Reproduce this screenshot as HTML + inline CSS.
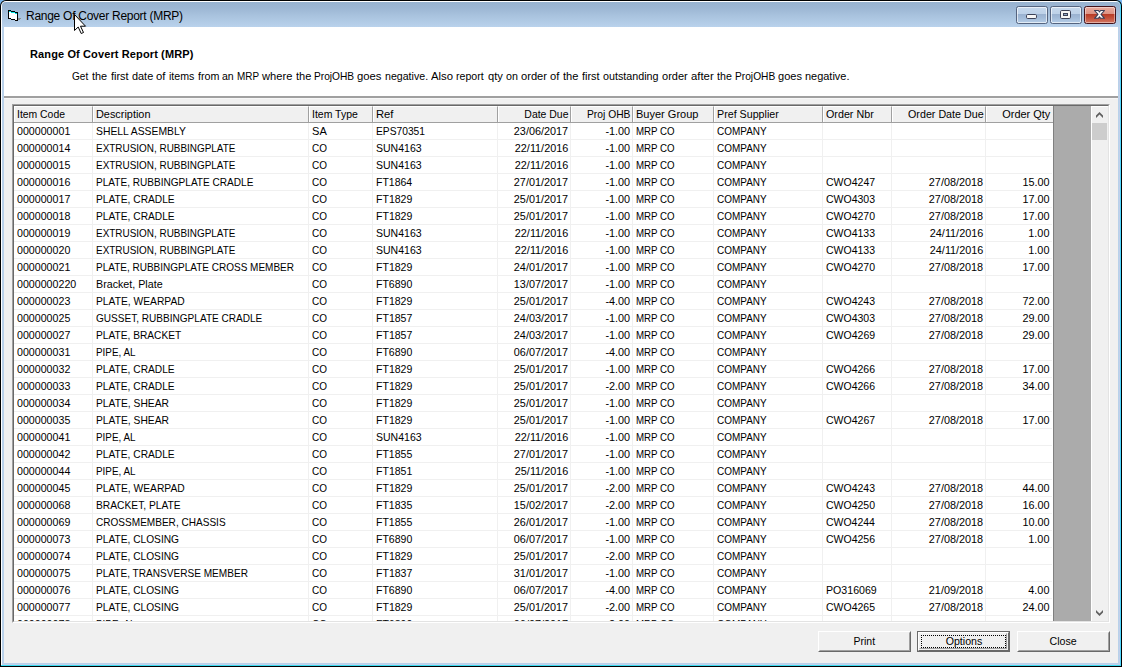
<!DOCTYPE html>
<html><head><meta charset="utf-8"><title>Range Of Cover Report (MRP)</title>
<style>
*{box-sizing:border-box;margin:0;padding:0}
html,body{width:1122px;height:667px;overflow:hidden;background:#7ab6ee}
body{font-family:"Liberation Sans",Arial,sans-serif;font-size:11px;color:#000;position:relative}
#win{position:absolute;left:0;top:0;width:1122px;height:667px;background:#000;border-radius:6px 6px 0 0;overflow:hidden}
#hl{position:absolute;left:1px;top:1px;width:1120px;height:665px;background:#fff;border-radius:5px 5px 0 0;border-right:1px solid #50d8ff;border-bottom:1px solid #3cdcf0}
#frame{position:absolute;left:2px;top:2px;width:1118px;height:663px;background:#b9d1ea;border-radius:4px 4px 0 0;box-shadow:inset -1px -1px 0 #c3d0ea}
#cap{position:absolute;left:2px;top:2px;width:1118px;height:25px;background:linear-gradient(#98b3d0 0%,#9db7d4 25%,#a9c3de 55%,#b9d2ec 100%);border-radius:4px 4px 0 0}
#ttl{position:absolute;left:26px;top:9px;font-size:12px;line-height:15px;letter-spacing:-0.27px;white-space:nowrap}
#client{position:absolute;left:4px;top:27px;width:1114px;height:636px;background:#f0f0f0}
#top{position:absolute;left:0;top:0;width:1114px;height:69px;background:#fff}
#sep1{position:absolute;left:0;top:69px;width:1114px;height:2px;background:#a0a0a0}
#sep2{position:absolute;left:0;top:71px;width:1114px;height:1px;background:#f7f7f7}
#h1{position:absolute;left:26px;top:20px;font-weight:bold;font-size:11px;line-height:14px;letter-spacing:.12px;white-space:nowrap}
#desc{position:absolute;left:0;top:42px;width:1114px;height:14px;font-size:11px;line-height:14px}
.w{position:absolute;top:0;white-space:pre;transform-origin:0 50%}
/* list */
#lb{position:absolute;left:8px;top:77px;width:1098px;height:519px;border:1px solid;border-color:#a0a0a0 #fff #fff #a0a0a0}
#lb2{position:absolute;left:0;top:0;width:1096px;height:517px;border:1px solid;border-color:#696969 #e3e3e3 #e3e3e3 #696969}
#lv{position:absolute;left:10px;top:79px;width:1077px;height:515px;background:#fff;overflow:hidden}
#grid{position:absolute;left:0;top:0;width:1040px;height:515px;overflow:hidden;
 background:repeating-linear-gradient(to bottom,transparent 0,transparent 16px,#f0f0f0 16px,#f0f0f0 17px) 0 0/1038px 100% no-repeat;}
#gray{position:absolute;left:1040px;top:0;width:37px;height:515px;background:#ababab}
.hdr{position:absolute;left:0;top:0;width:1040px;height:17px;background:#f0f0f0;border-bottom:1px solid #a0a0a0}
.h{position:absolute;top:0;height:16px;border-top:1px solid #fff;border-left:1px solid #fff;border-right:1px solid #a0a0a0}
.hdr .t{top:0;height:16px;line-height:16px}
.row{position:absolute;left:0;width:1040px;height:17px}
.t{position:absolute;top:0;height:16px;line-height:16px;white-space:nowrap;transform-origin:0 50%}
.t.r{transform-origin:100% 50%}
.bt{display:inline-block;transform-origin:50% 50%}
.vl{position:absolute;top:17px;width:1px;height:498px;background:#f0f0f0}
.vl.end{background:#808080;top:0;height:515px}
/* scrollbar */
#sb{position:absolute;left:1087px;top:79px;width:17px;height:515px;background:#f0f0f0;box-shadow:inset 1px 1px 0 #fff}
#thumb{position:absolute;left:1px;top:17px;width:15px;height:17px;background:#cdcdcd}
#sb svg{position:absolute;left:0}
/* buttons */
.btn{position:absolute;top:604px;width:93px;height:21px;background:#f0f0f0;border:1px solid;border-color:#fff #696969 #696969 #fff;text-align:center;line-height:18px;font-size:11px}
.btn:before{content:"";position:absolute;left:0;top:0;right:0;bottom:0;border:1px solid;border-color:#f0f0f0 #a0a0a0 #a0a0a0 #f0f0f0;pointer-events:none}
.btn.def{border-color:#696969}
.btn.def:before{border-color:#fff #696969 #696969 #fff}
.btn.def:after{content:"";position:absolute;left:1px;top:1px;right:2px;bottom:2px;border:1px solid;border-color:transparent #a0a0a0 #a0a0a0 transparent}
.focus{position:absolute;left:3px;top:3px;width:85px;height:13px;border:1px dotted #000}
/* caption buttons */
.cb{position:absolute;top:6px;width:32px;height:18px;border:1px solid #55647f;border-radius:2.500px;background:linear-gradient(#c6d8ec 0,#bdd1e8 44%,#9ab2d0 45%,#a3bcd9 70%,#b6cee8 100%);box-shadow:inset 0 0 0 1px rgba(255,255,255,.62)}
.cb.x{border-color:#43121a;background:linear-gradient(#eaac9f 0,#dc9283 44%,#b83b26 45%,#c4523c 70%,#d27865 100%);box-shadow:inset 0 0 0 1px rgba(255,255,255,.42)}
.cb svg{position:absolute;left:0;top:0}
</style></head>
<body>
<div id="win">
 <div id="hl"></div>
 <div id="frame"></div>
 <div id="cap"></div>
 <svg id="ico" style="position:absolute;left:8px;top:10px" width="13" height="11" shape-rendering="crispEdges"><path fill="#000" d="M0 0h3v1h-3zM0 1h1v1h-1zM3 1h4v1h-4zM0 2h1v1h-1zM7 2h3v1h-3zM0 3h1v1h-1zM9 3h1v1h-1zM0 4h1v1h-1zM9 4h1v1h-1zM0 5h1v1h-1zM9 5h1v1h-1zM0 6h1v1h-1zM9 6h1v1h-1zM0 7h1v1h-1zM9 7h1v1h-1zM0 8h3v1h-3zM9 8h1v1h-1zM3 9h4v1h-4zM9 9h1v1h-1zM7 10h3v1h-3z"/><path fill="#00e5e5" d="M1 1h2v1h-2zM3 2h4v1h-4zM7 3h2v1h-2z"/><path fill="#fff" d="M1 2h2v1h-2zM1 3h6v1h-6zM1 4h8v1h-8zM1 5h8v1h-8zM1 6h8v1h-8zM1 7h8v1h-8zM3 8h6v1h-6zM7 9h2v1h-2z"/><path fill="#8c8c8c" d="M10 8h3v1h-3zM10 9h2v1h-2z"/></svg>
 <div id="ttl">Range Of Cover Report (MRP)</div>
 <div class="cb" style="left:1016px"><svg width="30" height="16"><rect x="9.500" y="7.500" width="10" height="4" rx="1.200" fill="#f6f6f6" stroke="#3c4257"/></svg></div>
 <div class="cb" style="left:1050px"><svg width="30" height="16"><rect x="9.500" y="3.500" width="10" height="8" rx="1.200" fill="#f6f6f6" stroke="#3c4257"/><rect x="12.500" y="6.500" width="4" height="2" fill="#8fa6c4" stroke="#3c4257"/></svg></div>
 <div class="cb x" style="left:1084px"><svg width="30" height="16"><path d="M9.500 3.500h3.900l1.100 1.500 1.100-1.500h3.900l-3.500 3.900 3.500 3.900h-3.900l-1.100-1.500-1.100 1.500h-3.900l3.500-3.900z" fill="#fbfbfb" stroke="#3b3f58" stroke-width="1.100" stroke-linejoin="round"/></svg></div>

 <div id="client">
  <div id="top"></div><div id="sep1"></div><div id="sep2"></div>
  <div id="h1">Range Of Covert Report (MRP)</div>
  <div id="desc"><span class="w" style="left:68.30px;transform:scaleX(0.912)">Get </span><span class="w" style="left:88.25px;transform:scaleX(0.990)">the </span><span class="w" style="left:106.75px;transform:scaleX(0.994)">first </span><span class="w" style="left:127.85px;transform:scaleX(0.990)">date </span><span class="w" style="left:152.14px;transform:scaleX(1.030)">of </span><span class="w" style="left:165.22px;transform:scaleX(0.966)">items </span><span class="w" style="left:194.15px;transform:scaleX(0.974)">from </span><span class="w" style="left:218.47px;transform:scaleX(0.955)">an </span><span class="w" style="left:232.69px;transform:scaleX(0.900)">MRP </span><span class="w" style="left:258.25px;transform:scaleX(1.012)">where </span><span class="w" style="left:291.95px;transform:scaleX(1.003)">the </span><span class="w" style="left:309.97px;transform:scaleX(0.925)">ProjOHB </span><span class="w" style="left:353.14px;transform:scaleX(1.024)">goes </span><span class="w" style="left:380.52px;transform:scaleX(0.965)">negative. </span><span class="w" style="left:426.70px;transform:scaleX(1.030)">Also </span><span class="w" style="left:452.43px;transform:scaleX(0.964)">report </span><span class="w" style="left:483.64px;transform:scaleX(1.014)">qty </span><span class="w" style="left:502.06px;transform:scaleX(0.973)">on </span><span class="w" style="left:516.84px;transform:scaleX(1.014)">order </span><span class="w" style="left:546.24px;transform:scaleX(1.017)">of </span><span class="w" style="left:559.45px;transform:scaleX(1.010)">the </span><span class="w" style="left:578.25px;transform:scaleX(0.994)">first </span><span class="w" style="left:599.36px;transform:scaleX(0.976)">outstanding </span><span class="w" style="left:657.75px;transform:scaleX(1.002)">order </span><span class="w" style="left:686.84px;transform:scaleX(1.030)">after </span><span class="w" style="left:713.35px;transform:scaleX(0.969)">the </span><span class="w" style="left:730.87px;transform:scaleX(0.927)">ProjOHB </span><span class="w" style="left:774.15px;transform:scaleX(1.002)">goes </span><span class="w" style="left:801.00px;transform:scaleX(0.995)">negative.</span></div>
  <div id="lb"><div id="lb2"></div></div>
  <div id="lv">
   <div id="grid">
<div class="hdr"><i class="h" style="left:0px;width:79px"></i><i class="h" style="left:79px;width:216px"></i><i class="h" style="left:295px;width:64px"></i><i class="h" style="left:359px;width:125px"></i><i class="h" style="left:484px;width:73px"></i><i class="h" style="left:557px;width:62px"></i><i class="h" style="left:619px;width:81px"></i><i class="h" style="left:700px;width:109px"></i><i class="h" style="left:809px;width:69px"></i><i class="h" style="left:878px;width:94px"></i><i class="h" style="left:972px;width:68px"></i><span class="t" style="left:2.55px;transform:scaleX(0.945)">Item Code</span><span class="t" style="left:81.61px;transform:scaleX(0.990)">Description</span><span class="t" style="left:297.55px;transform:scaleX(0.952)">Item Type</span><span class="t" style="left:361.58px;transform:scaleX(1.022)">Ref</span><span class="t r" style="right:485.95px;transform:scaleX(0.949)">Date Due</span><span class="t r" style="right:423.78px;transform:scaleX(0.936)">Proj OHB</span><span class="t" style="left:621.60px;transform:scaleX(1.002)">Buyer Group</span><span class="t" style="left:702.63px;transform:scaleX(0.972)">Pref Supplier</span><span class="t" style="left:812.01px;transform:scaleX(0.976)">Order Nbr</span><span class="t r" style="right:70.56px;transform:scaleX(0.974)">Order Date Due</span><span class="t r" style="right:4.01px;transform:scaleX(0.994)">Order Qty</span></div>
<div class="row" style="top:17px"><span class="t" style="left:3.11px;transform:scaleX(0.968)">000000001</span><span class="t" style="left:82.03px;transform:scaleX(0.942)">SHELL ASSEMBLY</span><span class="t" style="left:298.00px;transform:scaleX(1.007)">SA</span><span class="t" style="left:361.66px;transform:scaleX(0.932)">EPS70351</span><span class="t r" style="right:485.60px;transform:scaleX(0.985)">23/06/2017</span><span class="t r" style="right:424.18px;transform:scaleX(0.985)">-1.00</span><span class="t" style="left:621.71px;transform:scaleX(0.882)">MRP CO</span><span class="t" style="left:703.00px;transform:scaleX(0.906)">COMPANY</span></div>
<div class="row" style="top:34px"><span class="t" style="left:3.11px;transform:scaleX(0.968)">000000014</span><span class="t" style="left:81.69px;transform:scaleX(0.903)">EXTRUSION, RUBBINGPLATE</span><span class="t" style="left:298.00px;transform:scaleX(0.906)">CO</span><span class="t" style="left:362.02px;transform:scaleX(0.956)">SUN4163</span><span class="t r" style="right:485.62px;transform:scaleX(0.985)">22/11/2016</span><span class="t r" style="right:424.18px;transform:scaleX(0.985)">-1.00</span><span class="t" style="left:621.71px;transform:scaleX(0.882)">MRP CO</span><span class="t" style="left:703.00px;transform:scaleX(0.906)">COMPANY</span></div>
<div class="row" style="top:51px"><span class="t" style="left:3.11px;transform:scaleX(0.968)">000000015</span><span class="t" style="left:81.69px;transform:scaleX(0.903)">EXTRUSION, RUBBINGPLATE</span><span class="t" style="left:298.00px;transform:scaleX(0.906)">CO</span><span class="t" style="left:362.02px;transform:scaleX(0.956)">SUN4163</span><span class="t r" style="right:485.62px;transform:scaleX(0.985)">22/11/2016</span><span class="t r" style="right:424.18px;transform:scaleX(0.985)">-1.00</span><span class="t" style="left:621.71px;transform:scaleX(0.882)">MRP CO</span><span class="t" style="left:703.00px;transform:scaleX(0.906)">COMPANY</span></div>
<div class="row" style="top:68px"><span class="t" style="left:3.11px;transform:scaleX(0.968)">000000016</span><span class="t" style="left:81.68px;transform:scaleX(0.915)">PLATE, RUBBINGPLATE CRADLE</span><span class="t" style="left:298.00px;transform:scaleX(0.906)">CO</span><span class="t" style="left:361.64px;transform:scaleX(0.954)">FT1864</span><span class="t r" style="right:485.60px;transform:scaleX(0.985)">27/01/2017</span><span class="t r" style="right:424.18px;transform:scaleX(0.985)">-1.00</span><span class="t" style="left:621.71px;transform:scaleX(0.882)">MRP CO</span><span class="t" style="left:703.00px;transform:scaleX(0.906)">COMPANY</span><span class="t" style="left:811.97px;transform:scaleX(0.956)">CWO4247</span><span class="t r" style="right:70.55px;transform:scaleX(0.985)">27/08/2018</span><span class="t r" style="right:4.38px;transform:scaleX(0.985)">15.00</span></div>
<div class="row" style="top:85px"><span class="t" style="left:3.11px;transform:scaleX(0.968)">000000017</span><span class="t" style="left:81.67px;transform:scaleX(0.928)">PLATE, CRADLE</span><span class="t" style="left:298.00px;transform:scaleX(0.906)">CO</span><span class="t" style="left:361.64px;transform:scaleX(0.959)">FT1829</span><span class="t r" style="right:485.60px;transform:scaleX(0.985)">25/01/2017</span><span class="t r" style="right:424.18px;transform:scaleX(0.985)">-1.00</span><span class="t" style="left:621.71px;transform:scaleX(0.882)">MRP CO</span><span class="t" style="left:703.00px;transform:scaleX(0.906)">COMPANY</span><span class="t" style="left:811.97px;transform:scaleX(0.955)">CWO4303</span><span class="t r" style="right:70.55px;transform:scaleX(0.985)">27/08/2018</span><span class="t r" style="right:4.38px;transform:scaleX(0.985)">17.00</span></div>
<div class="row" style="top:102px"><span class="t" style="left:3.11px;transform:scaleX(0.968)">000000018</span><span class="t" style="left:81.67px;transform:scaleX(0.928)">PLATE, CRADLE</span><span class="t" style="left:298.00px;transform:scaleX(0.906)">CO</span><span class="t" style="left:361.64px;transform:scaleX(0.959)">FT1829</span><span class="t r" style="right:485.60px;transform:scaleX(0.985)">25/01/2017</span><span class="t r" style="right:424.18px;transform:scaleX(0.985)">-1.00</span><span class="t" style="left:621.71px;transform:scaleX(0.882)">MRP CO</span><span class="t" style="left:703.00px;transform:scaleX(0.906)">COMPANY</span><span class="t" style="left:811.98px;transform:scaleX(0.954)">CWO4270</span><span class="t r" style="right:70.55px;transform:scaleX(0.985)">27/08/2018</span><span class="t r" style="right:4.38px;transform:scaleX(0.985)">17.00</span></div>
<div class="row" style="top:119px"><span class="t" style="left:3.11px;transform:scaleX(0.968)">000000019</span><span class="t" style="left:81.69px;transform:scaleX(0.903)">EXTRUSION, RUBBINGPLATE</span><span class="t" style="left:298.00px;transform:scaleX(0.906)">CO</span><span class="t" style="left:362.02px;transform:scaleX(0.956)">SUN4163</span><span class="t r" style="right:485.62px;transform:scaleX(0.985)">22/11/2016</span><span class="t r" style="right:424.18px;transform:scaleX(0.985)">-1.00</span><span class="t" style="left:621.71px;transform:scaleX(0.882)">MRP CO</span><span class="t" style="left:703.00px;transform:scaleX(0.906)">COMPANY</span><span class="t" style="left:811.97px;transform:scaleX(0.955)">CWO4133</span><span class="t r" style="right:70.52px;transform:scaleX(0.985)">24/11/2016</span><span class="t r" style="right:4.40px;transform:scaleX(0.985)">1.00</span></div>
<div class="row" style="top:136px"><span class="t" style="left:3.11px;transform:scaleX(0.968)">000000020</span><span class="t" style="left:81.69px;transform:scaleX(0.903)">EXTRUSION, RUBBINGPLATE</span><span class="t" style="left:298.00px;transform:scaleX(0.906)">CO</span><span class="t" style="left:362.02px;transform:scaleX(0.956)">SUN4163</span><span class="t r" style="right:485.62px;transform:scaleX(0.985)">22/11/2016</span><span class="t r" style="right:424.18px;transform:scaleX(0.985)">-1.00</span><span class="t" style="left:621.71px;transform:scaleX(0.882)">MRP CO</span><span class="t" style="left:703.00px;transform:scaleX(0.906)">COMPANY</span><span class="t" style="left:811.97px;transform:scaleX(0.955)">CWO4133</span><span class="t r" style="right:70.52px;transform:scaleX(0.985)">24/11/2016</span><span class="t r" style="right:4.40px;transform:scaleX(0.985)">1.00</span></div>
<div class="row" style="top:153px"><span class="t" style="left:3.11px;transform:scaleX(0.968)">000000021</span><span class="t" style="left:81.68px;transform:scaleX(0.909)">PLATE, RUBBINGPLATE CROSS MEMBER</span><span class="t" style="left:298.00px;transform:scaleX(0.906)">CO</span><span class="t" style="left:361.64px;transform:scaleX(0.959)">FT1829</span><span class="t r" style="right:485.60px;transform:scaleX(0.985)">24/01/2017</span><span class="t r" style="right:424.18px;transform:scaleX(0.985)">-1.00</span><span class="t" style="left:621.71px;transform:scaleX(0.882)">MRP CO</span><span class="t" style="left:703.00px;transform:scaleX(0.906)">COMPANY</span><span class="t" style="left:811.98px;transform:scaleX(0.954)">CWO4270</span><span class="t r" style="right:70.55px;transform:scaleX(0.985)">27/08/2018</span><span class="t r" style="right:4.38px;transform:scaleX(0.985)">17.00</span></div>
<div class="row" style="top:170px"><span class="t" style="left:3.11px;transform:scaleX(0.968)">0000000220</span><span class="t" style="left:81.62px;transform:scaleX(0.973)">Bracket, Plate</span><span class="t" style="left:298.00px;transform:scaleX(0.906)">CO</span><span class="t" style="left:361.64px;transform:scaleX(0.956)">FT6890</span><span class="t r" style="right:485.60px;transform:scaleX(0.985)">13/07/2017</span><span class="t r" style="right:424.18px;transform:scaleX(0.985)">-1.00</span><span class="t" style="left:621.71px;transform:scaleX(0.882)">MRP CO</span><span class="t" style="left:703.00px;transform:scaleX(0.906)">COMPANY</span></div>
<div class="row" style="top:187px"><span class="t" style="left:3.11px;transform:scaleX(0.968)">000000023</span><span class="t" style="left:81.66px;transform:scaleX(0.934)">PLATE, WEARPAD</span><span class="t" style="left:298.00px;transform:scaleX(0.906)">CO</span><span class="t" style="left:361.64px;transform:scaleX(0.959)">FT1829</span><span class="t r" style="right:485.60px;transform:scaleX(0.985)">25/01/2017</span><span class="t r" style="right:424.18px;transform:scaleX(0.985)">-4.00</span><span class="t" style="left:621.71px;transform:scaleX(0.882)">MRP CO</span><span class="t" style="left:703.00px;transform:scaleX(0.906)">COMPANY</span><span class="t" style="left:811.97px;transform:scaleX(0.955)">CWO4243</span><span class="t r" style="right:70.55px;transform:scaleX(0.985)">27/08/2018</span><span class="t r" style="right:4.38px;transform:scaleX(0.985)">72.00</span></div>
<div class="row" style="top:204px"><span class="t" style="left:3.11px;transform:scaleX(0.968)">000000025</span><span class="t" style="left:82.00px;transform:scaleX(0.914)">GUSSET, RUBBINGPLATE CRADLE</span><span class="t" style="left:298.00px;transform:scaleX(0.906)">CO</span><span class="t" style="left:361.64px;transform:scaleX(0.959)">FT1857</span><span class="t r" style="right:485.60px;transform:scaleX(0.985)">24/03/2017</span><span class="t r" style="right:424.18px;transform:scaleX(0.985)">-1.00</span><span class="t" style="left:621.71px;transform:scaleX(0.882)">MRP CO</span><span class="t" style="left:703.00px;transform:scaleX(0.906)">COMPANY</span><span class="t" style="left:811.97px;transform:scaleX(0.955)">CWO4303</span><span class="t r" style="right:70.55px;transform:scaleX(0.985)">27/08/2018</span><span class="t r" style="right:4.38px;transform:scaleX(0.985)">29.00</span></div>
<div class="row" style="top:221px"><span class="t" style="left:3.11px;transform:scaleX(0.968)">000000027</span><span class="t" style="left:81.67px;transform:scaleX(0.926)">PLATE, BRACKET</span><span class="t" style="left:298.00px;transform:scaleX(0.906)">CO</span><span class="t" style="left:361.64px;transform:scaleX(0.959)">FT1857</span><span class="t r" style="right:485.60px;transform:scaleX(0.985)">24/03/2017</span><span class="t r" style="right:424.18px;transform:scaleX(0.985)">-1.00</span><span class="t" style="left:621.71px;transform:scaleX(0.882)">MRP CO</span><span class="t" style="left:703.00px;transform:scaleX(0.906)">COMPANY</span><span class="t" style="left:811.97px;transform:scaleX(0.956)">CWO4269</span><span class="t r" style="right:70.55px;transform:scaleX(0.985)">27/08/2018</span><span class="t r" style="right:4.38px;transform:scaleX(0.985)">29.00</span></div>
<div class="row" style="top:238px"><span class="t" style="left:3.11px;transform:scaleX(0.968)">000000031</span><span class="t" style="left:81.69px;transform:scaleX(0.897)">PIPE, AL</span><span class="t" style="left:298.00px;transform:scaleX(0.906)">CO</span><span class="t" style="left:361.64px;transform:scaleX(0.956)">FT6890</span><span class="t r" style="right:485.60px;transform:scaleX(0.985)">06/07/2017</span><span class="t r" style="right:424.18px;transform:scaleX(0.985)">-4.00</span><span class="t" style="left:621.71px;transform:scaleX(0.882)">MRP CO</span><span class="t" style="left:703.00px;transform:scaleX(0.906)">COMPANY</span></div>
<div class="row" style="top:255px"><span class="t" style="left:3.11px;transform:scaleX(0.968)">000000032</span><span class="t" style="left:81.67px;transform:scaleX(0.928)">PLATE, CRADLE</span><span class="t" style="left:298.00px;transform:scaleX(0.906)">CO</span><span class="t" style="left:361.64px;transform:scaleX(0.959)">FT1829</span><span class="t r" style="right:485.60px;transform:scaleX(0.985)">25/01/2017</span><span class="t r" style="right:424.18px;transform:scaleX(0.985)">-1.00</span><span class="t" style="left:621.71px;transform:scaleX(0.882)">MRP CO</span><span class="t" style="left:703.00px;transform:scaleX(0.906)">COMPANY</span><span class="t" style="left:811.97px;transform:scaleX(0.955)">CWO4266</span><span class="t r" style="right:70.55px;transform:scaleX(0.985)">27/08/2018</span><span class="t r" style="right:4.38px;transform:scaleX(0.985)">17.00</span></div>
<div class="row" style="top:272px"><span class="t" style="left:3.11px;transform:scaleX(0.968)">000000033</span><span class="t" style="left:81.67px;transform:scaleX(0.928)">PLATE, CRADLE</span><span class="t" style="left:298.00px;transform:scaleX(0.906)">CO</span><span class="t" style="left:361.64px;transform:scaleX(0.959)">FT1829</span><span class="t r" style="right:485.60px;transform:scaleX(0.985)">25/01/2017</span><span class="t r" style="right:424.18px;transform:scaleX(0.985)">-2.00</span><span class="t" style="left:621.71px;transform:scaleX(0.882)">MRP CO</span><span class="t" style="left:703.00px;transform:scaleX(0.906)">COMPANY</span><span class="t" style="left:811.97px;transform:scaleX(0.955)">CWO4266</span><span class="t r" style="right:70.55px;transform:scaleX(0.985)">27/08/2018</span><span class="t r" style="right:4.38px;transform:scaleX(0.985)">34.00</span></div>
<div class="row" style="top:289px"><span class="t" style="left:3.11px;transform:scaleX(0.968)">000000034</span><span class="t" style="left:81.66px;transform:scaleX(0.935)">PLATE, SHEAR</span><span class="t" style="left:298.00px;transform:scaleX(0.906)">CO</span><span class="t" style="left:361.64px;transform:scaleX(0.959)">FT1829</span><span class="t r" style="right:485.60px;transform:scaleX(0.985)">25/01/2017</span><span class="t r" style="right:424.18px;transform:scaleX(0.985)">-1.00</span><span class="t" style="left:621.71px;transform:scaleX(0.882)">MRP CO</span><span class="t" style="left:703.00px;transform:scaleX(0.906)">COMPANY</span></div>
<div class="row" style="top:306px"><span class="t" style="left:3.11px;transform:scaleX(0.968)">000000035</span><span class="t" style="left:81.66px;transform:scaleX(0.935)">PLATE, SHEAR</span><span class="t" style="left:298.00px;transform:scaleX(0.906)">CO</span><span class="t" style="left:361.64px;transform:scaleX(0.959)">FT1829</span><span class="t r" style="right:485.60px;transform:scaleX(0.985)">25/01/2017</span><span class="t r" style="right:424.18px;transform:scaleX(0.985)">-1.00</span><span class="t" style="left:621.71px;transform:scaleX(0.882)">MRP CO</span><span class="t" style="left:703.00px;transform:scaleX(0.906)">COMPANY</span><span class="t" style="left:811.97px;transform:scaleX(0.956)">CWO4267</span><span class="t r" style="right:70.55px;transform:scaleX(0.985)">27/08/2018</span><span class="t r" style="right:4.38px;transform:scaleX(0.985)">17.00</span></div>
<div class="row" style="top:323px"><span class="t" style="left:3.11px;transform:scaleX(0.968)">000000041</span><span class="t" style="left:81.69px;transform:scaleX(0.897)">PIPE, AL</span><span class="t" style="left:298.00px;transform:scaleX(0.906)">CO</span><span class="t" style="left:362.02px;transform:scaleX(0.956)">SUN4163</span><span class="t r" style="right:485.62px;transform:scaleX(0.985)">22/11/2016</span><span class="t r" style="right:424.18px;transform:scaleX(0.985)">-1.00</span><span class="t" style="left:621.71px;transform:scaleX(0.882)">MRP CO</span><span class="t" style="left:703.00px;transform:scaleX(0.906)">COMPANY</span></div>
<div class="row" style="top:340px"><span class="t" style="left:3.11px;transform:scaleX(0.968)">000000042</span><span class="t" style="left:81.67px;transform:scaleX(0.928)">PLATE, CRADLE</span><span class="t" style="left:298.00px;transform:scaleX(0.906)">CO</span><span class="t" style="left:361.64px;transform:scaleX(0.956)">FT1855</span><span class="t r" style="right:485.60px;transform:scaleX(0.985)">27/01/2017</span><span class="t r" style="right:424.18px;transform:scaleX(0.985)">-1.00</span><span class="t" style="left:621.71px;transform:scaleX(0.882)">MRP CO</span><span class="t" style="left:703.00px;transform:scaleX(0.906)">COMPANY</span></div>
<div class="row" style="top:357px"><span class="t" style="left:3.11px;transform:scaleX(0.968)">000000044</span><span class="t" style="left:81.69px;transform:scaleX(0.897)">PIPE, AL</span><span class="t" style="left:298.00px;transform:scaleX(0.906)">CO</span><span class="t" style="left:361.64px;transform:scaleX(0.959)">FT1851</span><span class="t r" style="right:485.62px;transform:scaleX(0.985)">25/11/2016</span><span class="t r" style="right:424.18px;transform:scaleX(0.985)">-1.00</span><span class="t" style="left:621.71px;transform:scaleX(0.882)">MRP CO</span><span class="t" style="left:703.00px;transform:scaleX(0.906)">COMPANY</span></div>
<div class="row" style="top:374px"><span class="t" style="left:3.11px;transform:scaleX(0.968)">000000045</span><span class="t" style="left:81.66px;transform:scaleX(0.934)">PLATE, WEARPAD</span><span class="t" style="left:298.00px;transform:scaleX(0.906)">CO</span><span class="t" style="left:361.64px;transform:scaleX(0.959)">FT1829</span><span class="t r" style="right:485.60px;transform:scaleX(0.985)">25/01/2017</span><span class="t r" style="right:424.18px;transform:scaleX(0.985)">-2.00</span><span class="t" style="left:621.71px;transform:scaleX(0.882)">MRP CO</span><span class="t" style="left:703.00px;transform:scaleX(0.906)">COMPANY</span><span class="t" style="left:811.97px;transform:scaleX(0.955)">CWO4243</span><span class="t r" style="right:70.55px;transform:scaleX(0.985)">27/08/2018</span><span class="t r" style="right:4.38px;transform:scaleX(0.985)">44.00</span></div>
<div class="row" style="top:391px"><span class="t" style="left:3.11px;transform:scaleX(0.968)">000000068</span><span class="t" style="left:81.66px;transform:scaleX(0.932)">BRACKET, PLATE</span><span class="t" style="left:298.00px;transform:scaleX(0.906)">CO</span><span class="t" style="left:361.64px;transform:scaleX(0.956)">FT1835</span><span class="t r" style="right:485.60px;transform:scaleX(0.985)">15/02/2017</span><span class="t r" style="right:424.18px;transform:scaleX(0.985)">-2.00</span><span class="t" style="left:621.71px;transform:scaleX(0.882)">MRP CO</span><span class="t" style="left:703.00px;transform:scaleX(0.906)">COMPANY</span><span class="t" style="left:811.98px;transform:scaleX(0.954)">CWO4250</span><span class="t r" style="right:70.55px;transform:scaleX(0.985)">27/08/2018</span><span class="t r" style="right:4.38px;transform:scaleX(0.985)">16.00</span></div>
<div class="row" style="top:408px"><span class="t" style="left:3.11px;transform:scaleX(0.968)">000000069</span><span class="t" style="left:82.00px;transform:scaleX(0.914)">CROSSMEMBER, CHASSIS</span><span class="t" style="left:298.00px;transform:scaleX(0.906)">CO</span><span class="t" style="left:361.64px;transform:scaleX(0.956)">FT1855</span><span class="t r" style="right:485.60px;transform:scaleX(0.985)">26/01/2017</span><span class="t r" style="right:424.18px;transform:scaleX(0.985)">-1.00</span><span class="t" style="left:621.71px;transform:scaleX(0.882)">MRP CO</span><span class="t" style="left:703.00px;transform:scaleX(0.906)">COMPANY</span><span class="t" style="left:811.98px;transform:scaleX(0.952)">CWO4244</span><span class="t r" style="right:70.55px;transform:scaleX(0.985)">27/08/2018</span><span class="t r" style="right:4.38px;transform:scaleX(0.985)">10.00</span></div>
<div class="row" style="top:425px"><span class="t" style="left:3.11px;transform:scaleX(0.968)">000000073</span><span class="t" style="left:81.67px;transform:scaleX(0.926)">PLATE, CLOSING</span><span class="t" style="left:298.00px;transform:scaleX(0.906)">CO</span><span class="t" style="left:361.64px;transform:scaleX(0.956)">FT6890</span><span class="t r" style="right:485.60px;transform:scaleX(0.985)">06/07/2017</span><span class="t r" style="right:424.18px;transform:scaleX(0.985)">-1.00</span><span class="t" style="left:621.71px;transform:scaleX(0.882)">MRP CO</span><span class="t" style="left:703.00px;transform:scaleX(0.906)">COMPANY</span><span class="t" style="left:811.97px;transform:scaleX(0.955)">CWO4256</span><span class="t r" style="right:70.55px;transform:scaleX(0.985)">27/08/2018</span><span class="t r" style="right:4.40px;transform:scaleX(0.985)">1.00</span></div>
<div class="row" style="top:442px"><span class="t" style="left:3.11px;transform:scaleX(0.968)">000000074</span><span class="t" style="left:81.67px;transform:scaleX(0.926)">PLATE, CLOSING</span><span class="t" style="left:298.00px;transform:scaleX(0.906)">CO</span><span class="t" style="left:361.64px;transform:scaleX(0.959)">FT1829</span><span class="t r" style="right:485.60px;transform:scaleX(0.985)">25/01/2017</span><span class="t r" style="right:424.18px;transform:scaleX(0.985)">-2.00</span><span class="t" style="left:621.71px;transform:scaleX(0.882)">MRP CO</span><span class="t" style="left:703.00px;transform:scaleX(0.906)">COMPANY</span></div>
<div class="row" style="top:459px"><span class="t" style="left:3.11px;transform:scaleX(0.968)">000000075</span><span class="t" style="left:81.68px;transform:scaleX(0.916)">PLATE, TRANSVERSE MEMBER</span><span class="t" style="left:298.00px;transform:scaleX(0.906)">CO</span><span class="t" style="left:361.64px;transform:scaleX(0.959)">FT1837</span><span class="t r" style="right:485.60px;transform:scaleX(0.985)">31/01/2017</span><span class="t r" style="right:424.18px;transform:scaleX(0.985)">-1.00</span><span class="t" style="left:621.71px;transform:scaleX(0.882)">MRP CO</span><span class="t" style="left:703.00px;transform:scaleX(0.906)">COMPANY</span></div>
<div class="row" style="top:476px"><span class="t" style="left:3.11px;transform:scaleX(0.968)">000000076</span><span class="t" style="left:81.67px;transform:scaleX(0.926)">PLATE, CLOSING</span><span class="t" style="left:298.00px;transform:scaleX(0.906)">CO</span><span class="t" style="left:361.64px;transform:scaleX(0.956)">FT6890</span><span class="t r" style="right:485.60px;transform:scaleX(0.985)">06/07/2017</span><span class="t r" style="right:424.18px;transform:scaleX(0.985)">-4.00</span><span class="t" style="left:621.71px;transform:scaleX(0.882)">MRP CO</span><span class="t" style="left:703.00px;transform:scaleX(0.906)">COMPANY</span><span class="t" style="left:811.63px;transform:scaleX(0.965)">PO316069</span><span class="t r" style="right:70.55px;transform:scaleX(0.985)">21/09/2018</span><span class="t r" style="right:4.40px;transform:scaleX(0.985)">4.00</span></div>
<div class="row" style="top:493px"><span class="t" style="left:3.11px;transform:scaleX(0.968)">000000077</span><span class="t" style="left:81.67px;transform:scaleX(0.926)">PLATE, CLOSING</span><span class="t" style="left:298.00px;transform:scaleX(0.906)">CO</span><span class="t" style="left:361.64px;transform:scaleX(0.959)">FT1829</span><span class="t r" style="right:485.60px;transform:scaleX(0.985)">25/01/2017</span><span class="t r" style="right:424.18px;transform:scaleX(0.985)">-2.00</span><span class="t" style="left:621.71px;transform:scaleX(0.882)">MRP CO</span><span class="t" style="left:703.00px;transform:scaleX(0.906)">COMPANY</span><span class="t" style="left:811.98px;transform:scaleX(0.954)">CWO4265</span><span class="t r" style="right:70.55px;transform:scaleX(0.985)">27/08/2018</span><span class="t r" style="right:4.38px;transform:scaleX(0.985)">24.00</span></div>
<div class="row" style="top:510px"><span class="t" style="left:3.11px;transform:scaleX(0.968)">000000078</span><span class="t" style="left:81.69px;transform:scaleX(0.897)">PIPE, AL</span><span class="t" style="left:298.00px;transform:scaleX(0.906)">CO</span><span class="t" style="left:361.64px;transform:scaleX(0.956)">FT6890</span><span class="t r" style="right:485.60px;transform:scaleX(0.985)">06/07/2017</span><span class="t r" style="right:424.18px;transform:scaleX(0.985)">-2.00</span><span class="t" style="left:621.71px;transform:scaleX(0.882)">MRP CO</span><span class="t" style="left:703.00px;transform:scaleX(0.906)">COMPANY</span></div>
<i class="vl" style="left:78px"></i>
<i class="vl" style="left:294px"></i>
<i class="vl" style="left:358px"></i>
<i class="vl" style="left:483px"></i>
<i class="vl" style="left:556px"></i>
<i class="vl" style="left:618px"></i>
<i class="vl" style="left:699px"></i>
<i class="vl" style="left:808px"></i>
<i class="vl" style="left:877px"></i>
<i class="vl" style="left:971px"></i>
<i class="vl end" style="left:1039px"></i>
   </div>
   <div id="gray"></div>
  </div>
  <div id="sb">
   <svg width="17" height="17" style="top:0"><path d="M8.500 6l3.500 3.500v2.500l-3.500-3.500-3.500 3.500v-2.500z" fill="#606060"/></svg>
   <div id="thumb"></div>
   <svg width="17" height="17" style="top:498px"><path d="M8.500 12l3.500-3.500v-2.500l-3.500 3.500-3.500-3.500v2.500z" fill="#606060"/></svg>
  </div>
  <div class="btn" style="left:814px"><span class="bt" style="transform:scaleX(0.952)">Print</span></div>
  <div class="btn def" style="left:913px"><span class="bt" style="transform:scaleX(0.966)">Options</span><div class="focus"></div></div>
  <div class="btn" style="left:1013px"><span class="bt" style="transform:scaleX(0.967)">Close</span></div>
 </div>
 <svg id="cur" style="position:absolute;left:73px;top:13px" width="14" height="22"><path d="M1.500 1.500v16l3.700-3.500 3 6.500 2.300-1-3-6.300h5z" fill="#fff" stroke="#000" stroke-width="1" stroke-linejoin="miter"/></svg>
</div>
</body></html>
